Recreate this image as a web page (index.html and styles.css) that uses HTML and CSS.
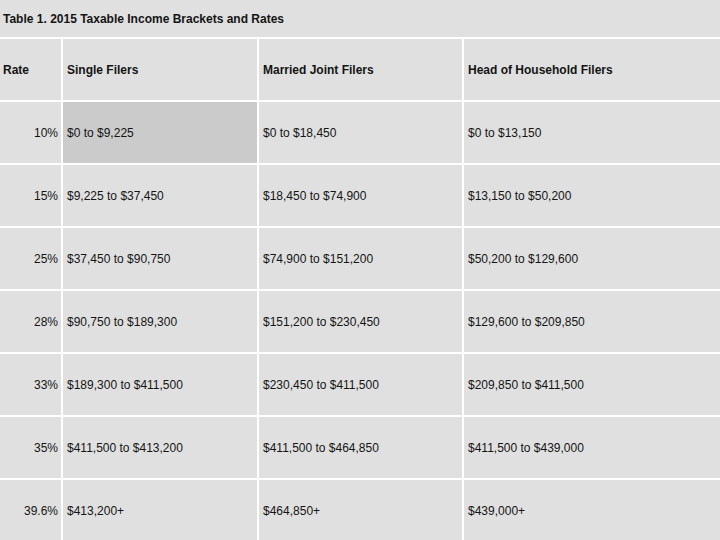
FILE: index.html
```html
<!DOCTYPE html>
<html>
<head>
<meta charset="utf-8">
<link rel="stylesheet" href="styles.css">
<title>2015 Taxable Income Brackets and Rates</title>
</head>
<body>
<table class="brackets">
  <colgroup>
    <col class="c-rate">
    <col class="c-single">
    <col class="c-joint">
    <col class="c-head">
  </colgroup>
  <tr class="title-row"><th colspan="4" class="title">Table 1. 2015 Taxable Income Brackets and Rates</th></tr>
  <tr class="row"><th>Rate</th><th>Single Filers</th><th>Married Joint Filers</th><th>Head of Household Filers</th></tr>
  <tr class="row"><td class="rate">10%</td><td class="hl">$0 to $9,225</td><td>$0 to $18,450</td><td>$0 to $13,150</td></tr>
  <tr class="row"><td class="rate">15%</td><td>$9,225 to $37,450</td><td>$18,450 to $74,900</td><td>$13,150 to $50,200</td></tr>
  <tr class="row"><td class="rate">25%</td><td>$37,450 to $90,750</td><td>$74,900 to $151,200</td><td>$50,200 to $129,600</td></tr>
  <tr class="row"><td class="rate">28%</td><td>$90,750 to $189,300</td><td>$151,200 to $230,450</td><td>$129,600 to $209,850</td></tr>
  <tr class="row"><td class="rate">33%</td><td>$189,300 to $411,500</td><td>$230,450 to $411,500</td><td>$209,850 to $411,500</td></tr>
  <tr class="row"><td class="rate">35%</td><td>$411,500 to $413,200</td><td>$411,500 to $464,850</td><td>$411,500 to $439,000</td></tr>
  <tr class="row"><td class="rate">39.6%</td><td>$413,200+</td><td>$464,850+</td><td>$439,000+</td></tr>
</table>
</body>
</html>
```

FILE: styles.css
```css
html, body {
  margin: 0;
  padding: 0;
  background: #ffffff;
  overflow: hidden;
}

.brackets {
  table-layout: fixed;
  width: 728px;
  margin: -2px 0 0 -3px;
  border-collapse: separate;
  border-spacing: 2px;
  background: #ffffff;
  font-family: "Liberation Sans", Arial, sans-serif;
  font-size: 12px;
  color: #141414;
}

.c-rate { width: 62px; }
.c-single { width: 194px; }
.c-joint { width: 203px; }
.c-head { width: auto; }

.brackets th,
.brackets td {
  background: #e0e0e0;
  padding: 0 3px 0 4px;
  text-align: left;
  vertical-align: middle;
  white-space: nowrap;
  overflow: hidden;
}

.brackets th {
  font-weight: bold;
}

.title-row th {
  height: 37px;
}

.row th,
.row td {
  height: 61px;
}

.brackets td.rate {
  text-align: right;
}

.brackets td.hl {
  background: #cbcbcb;
}
```
